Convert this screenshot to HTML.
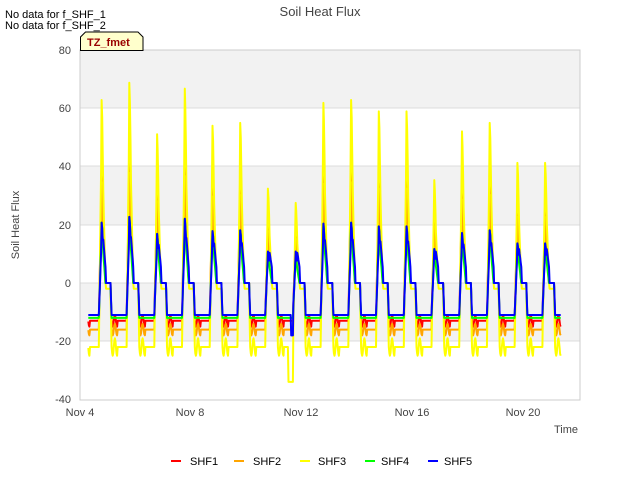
<!DOCTYPE html>
<html><head><meta charset="utf-8"><style>
body{margin:0;background:#fff;width:640px;height:480px;overflow:hidden;font-family:"Liberation Sans",sans-serif}
</style></head><body>
<svg id="s" width="640" height="480" xmlns="http://www.w3.org/2000/svg" font-family="Liberation Sans, sans-serif">
<rect x="80" y="50" width="500" height="350" fill="#fff"/>
<rect x="80" y="50" width="500" height="58" fill="#f2f2f2"/>
<rect x="80" y="166" width="500" height="59" fill="#f2f2f2"/>
<rect x="80" y="283" width="500" height="58" fill="#f2f2f2"/>
<g stroke="#dcdcdc" stroke-width="1">
<line x1="80" x2="580" y1="108" y2="108"/><line x1="80" x2="580" y1="166" y2="166"/>
<line x1="80" x2="580" y1="225" y2="225"/><line x1="80" x2="580" y1="283" y2="283"/>
<line x1="80" x2="580" y1="341" y2="341"/>
</g>
<rect x="80" y="50" width="500" height="350" fill="none" stroke="#ccc"/>
<g id="lines" fill="none" stroke-width="2" stroke-linejoin="round"></g>
<g font-size="11" fill="#444" text-anchor="end">
<text x="71" y="54">80</text><text x="71" y="112">60</text><text x="71" y="170">40</text>
<text x="71" y="229">20</text><text x="71" y="287">0</text><text x="71" y="345">-20</text><text x="71" y="403">-40</text>
</g>
<g font-size="11" fill="#444" text-anchor="middle">
<text x="80" y="416">Nov 4</text><text x="190" y="416">Nov 8</text><text x="301" y="416">Nov 12</text>
<text x="412" y="416">Nov 16</text><text x="523" y="416">Nov 20</text>
</g>
<text x="578" y="433" font-size="11" fill="#444" text-anchor="end">Time</text>
<text x="19" y="225" font-size="11" fill="#444" text-anchor="middle" transform="rotate(-90 19 225)">Soil Heat Flux</text>
<text x="320" y="16" font-size="13" fill="#444" text-anchor="middle">Soil Heat Flux</text>
<text x="5" y="18" font-size="11" fill="#000">No data for f_SHF_1</text>
<text x="5" y="29" font-size="11" fill="#000">No data for f_SHF_2</text>
<path d="M80.5,50.5 V37 l5,-5 H138 l5,5 V50.5 Z" fill="#ffffcc" stroke="#000"/>
<text x="87" y="46" font-size="11" font-weight="bold" fill="#990000">TZ_fmet</text>
<g font-size="11" fill="#000">
<line x1="171" x2="181" y1="461" y2="461" stroke="#f00" stroke-width="2"/><text x="190" y="465">SHF1</text>
<line x1="234" x2="244" y1="461" y2="461" stroke="#ffa500" stroke-width="2"/><text x="253" y="465">SHF2</text>
<line x1="300" x2="310" y1="461" y2="461" stroke="#ff0" stroke-width="2"/><text x="318" y="465">SHF3</text>
<line x1="365" x2="375" y1="461" y2="461" stroke="#0f0" stroke-width="2"/><text x="381" y="465">SHF4</text>
<line x1="428" x2="438" y1="461" y2="461" stroke="#00f" stroke-width="2"/><text x="444" y="465">SHF5</text>
</g>
</svg>
<script>
var peaks3=[64,70,52,68,55,56,33,28,63,64,60,60,36,53,56,42,42];
var X=function(d){return 80+(d-4)*27.72};
var Y=function(v){return 283-v*2.91};
var series=[
 {c:"#f00",s:0.68,lo:-13,mid:0},
 {c:"#ffa500",s:0.55,lo:-16,mid:0},
 {c:"#ff0",s:1,lo:-22,mid:-2},
 {c:"#0f0",s:0.33,lo:-12,mid:0},
 {c:"#00f",s:0.33,lo:-11,mid:0}];
var g=document.getElementById("lines");
series.forEach(function(se,k){
 var pts=[];
 for(var t=4.3;t<=21.35;t+=0.02){
  var d=Math.floor(t),f=t-d,i=d-4,v;
  var P=peaks3[Math.min(i,16)]*se.s;
  if(k==4)P=Math.max(P,11);
  if(f<0.1){v=se.mid;}
  else if(f<0.14){v=se.mid+(se.lo-se.mid)*(f-0.1)/0.04;}
  else if(f<0.68){v=se.lo; if(k!=4&&k!=3&&f<0.35)v=se.lo+ (k==2?-3:-2)*Math.sin((f-0.14)*40);}
  else if(f<0.76){v=se.lo+(P*(k==4?0.5:0.6)-se.lo)*(f-0.68)/0.08;}
  else if(f<0.83){v=P*(0.85+0.15*Math.sin(f*90));}
  else if(f<0.92){v=P*(k==4?0.5:0.55)*(1-(f-0.83)/0.09)+ (k==4?5.5:0);}
  else v=se.mid;
  if(k==2&&t>11.5&&t<12.0&&f<0.68)v=-34;
  if(k==4&&t>11.6&&t<12.0&&f<0.68)v=-18;
  pts.push(X(t).toFixed(1)+","+Y(v).toFixed(1));
 }
 var p=document.createElementNS("http://www.w3.org/2000/svg","polyline");
 p.setAttribute("points",pts.join(" "));p.setAttribute("stroke",se.c);
 g.appendChild(p);
});
</script>
</body></html>
